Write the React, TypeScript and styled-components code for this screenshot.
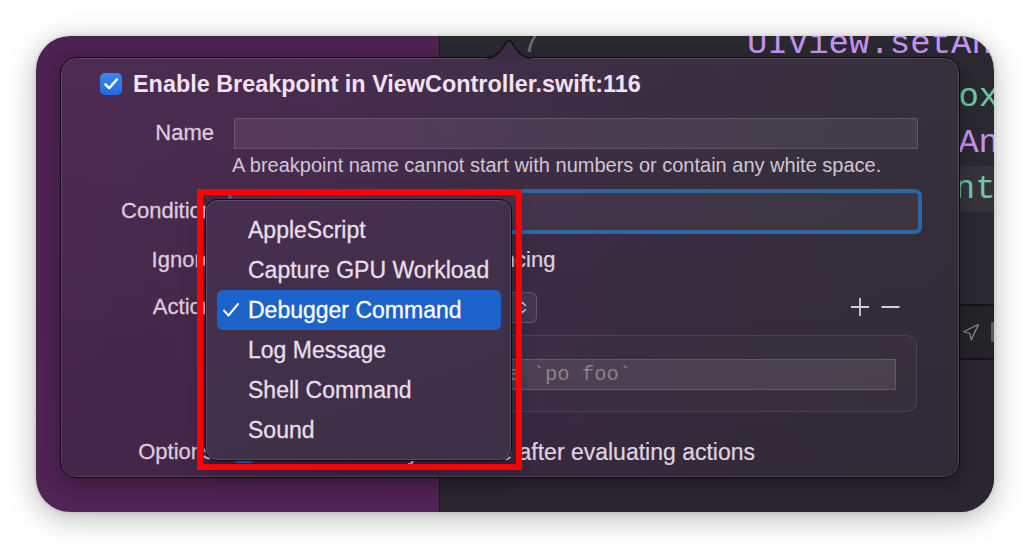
import React from "react";
import styled, { createGlobalStyle } from "styled-components";
import { Navigation } from "lucide-react";

const GlobalStyle = createGlobalStyle`
  html, body { margin: 0; padding: 0; background: #ffffff; }
  body { font-family: "Liberation Sans", Arial, sans-serif; -webkit-font-smoothing: antialiased; }
  *, *::before, *::after { box-sizing: border-box; }
`;

const Page = styled.div`
  width: 1030px;
  height: 548px;
  padding: 36px;
  background: #ffffff;
  overflow: hidden;
`;

const Window = styled.div`
  position: relative;
  display: flex;
  width: 958px;
  height: 476px;
  border-radius: 34px;
  overflow: hidden;
  box-shadow: 0 6px 30px rgba(0, 0, 0, 0.28), 0 0 4px rgba(0, 0, 0, 0.14);
`;

const Sidebar = styled.div`
  width: 403px;
  flex: none;
  background: linear-gradient(180deg, #4c2250 0%, #502454 100%);
`;

const Editor = styled.div`
  flex: 1;
  display: flex;
  flex-direction: column;
  background: #2a292f;
  border-left: 1px solid #1b1a1e;
`;

const CodeArea = styled.div`
  height: 268px;
  flex: none;
  overflow: hidden;
`;

const Lines = styled.div`
  margin-top: -22px;
`;

const CodeLine = styled.div<{ $current?: boolean; $height?: number }>`
  display: flex;
  height: ${(p) => p.$height ?? 46}px;
  line-height: ${(p) => p.$height ?? 46}px;
  font-family: "Liberation Mono", "DejaVu Sans Mono", monospace;
  font-size: 34px;
  white-space: nowrap;
  background: ${(p) => (p.$current ? "#35343b" : "transparent")};
`;

const Gutter = styled.span`
  width: 100px;
  flex: none;
  text-align: right;
  color: #6d6c72;
  font-size: 30px;
`;

const Code = styled.span<{ $indent: number; $kind: "type" | "ident" }>`
  padding-left: ${(p) => p.$indent}px;
  color: ${(p) => (p.$kind === "type" ? "#c592f3" : "#6bc9a9")};
`;

const DebugBar = styled.div`
  height: 56px;
  flex: none;
  display: flex;
  align-items: center;
  padding-left: 521px;
  gap: 11px;
  background: #242328;
  border-top: 2px solid #141316;
  border-bottom: 2px solid #141316;
  color: #8f8e94;
`;

const BarStub = styled.span`
  width: 3px;
  height: 20px;
  border-radius: 1px;
  background: #5c5b61;
`;

const Console = styled.div`
  flex: 1;
  background: #2b2530;
`;

const Popover = styled.div`
  position: absolute;
  left: 24px;
  top: 21px;
  width: 900px;
  height: 421px;
  border-radius: 16px;
  border: 1px solid #0d0b0f;
  background: linear-gradient(180deg, rgba(255, 255, 255, 0.015), rgba(0, 0, 0, 0.07)),
    linear-gradient(90deg, #4a2850 0%, #45294d 28%, #3c2b44 52%, #352d3d 78%, #332d3a 100%);
  box-shadow: inset 0 0 0 1px rgba(255, 255, 255, 0.13), 0 6px 18px rgba(0, 0, 0, 0.3);
  padding: 6px 41px 0 0;
  display: flex;
  flex-direction: column;
  color: #e3d6e3;
`;

const Arrow = styled.svg`
  position: absolute;
  left: 426px;
  top: -22px;
`;

const TitleRow = styled.div`
  height: 40px;
  flex: none;
  display: flex;
  align-items: center;
  gap: 11px;
  padding-left: 39px;
`;

const CheckBox = styled.span<{ $offset?: number }>`
  width: 22px;
  height: 22px;
  flex: none;
  margin-left: ${(p) => p.$offset ?? 0}px;
  border-radius: 5px;
  background: linear-gradient(180deg, #3a87f0, #1e6ce2);
  display: flex;
  align-items: center;
  justify-content: center;
`;

const Title = styled.span`
  font-size: 23.4px;
  font-weight: 700;
  color: #f4e1f3;
  white-space: nowrap;
`;

const Form = styled.div`
  flex: none;
  margin-top: 13px;
  display: grid;
  grid-template-columns: 153px 1fr;
  grid-template-rows: 32px 32px 60px 38px 56px 77px 80px;
  column-gap: 18px;
  align-items: center;
`;

const Label = styled.span`
  text-align: right;
  font-size: 22px;
  color: #dccbdc;
  white-space: nowrap;
  -webkit-text-stroke: 0.3px currentColor;
`;

const TextField = styled.div<{ $width?: number }>`
  height: 31px;
  margin-left: 2px;
  width: ${(p) => (p.$width ? `${p.$width}px` : "auto")};
  flex: none;
  background: rgba(255, 255, 255, 0.075);
  border: 1px solid rgba(255, 255, 255, 0.13);
  border-radius: 1px;
`;

const Hint = styled.span`
  font-size: 20px;
  color: #d2c5d2;
  white-space: nowrap;
`;

const ConditionField = styled.div`
  height: 37px;
  border-radius: 3px;
  background: rgba(255, 255, 255, 0.04);
  box-shadow: 0 0 0 4px #2b68a2;
`;

const InlineRow = styled.div`
  display: flex;
  align-items: center;
`;

const BodyText = styled.span<{ $size?: number; $gap?: number }>`
  font-size: ${(p) => p.$size ?? 22}px;
  margin-left: ${(p) => p.$gap ?? 0}px;
  color: #e0d3e0;
  white-space: nowrap;
  -webkit-text-stroke: 0.2px currentColor;
`;

const PopupButton = styled.div`
  width: 305px;
  height: 31px;
  flex: none;
  display: flex;
  align-items: center;
  justify-content: space-between;
  padding: 0 9px 0 12px;
  border-radius: 6px;
  background: rgba(255, 255, 255, 0.06);
  border: 1px solid rgba(255, 255, 255, 0.17);
  font-size: 22px;
  color: #e6dae6;
`;

const Spacer = styled.span`
  flex: 1;
`;

const PlusMinus = styled.div`
  display: flex;
  align-items: center;
  gap: 11px;
  margin-right: 18px;
`;

const ActionBox = styled.div`
  height: 77px;
  margin-right: 1px;
  border: 1px solid rgba(255, 255, 255, 0.1);
  border-radius: 10px;
  background: rgba(255, 255, 255, 0.02);
  padding: 23px 20px 0 20px;
`;

const CommandField = styled.div`
  height: 31px;
  background: rgba(255, 255, 255, 0.09);
  border: 1px solid rgba(255, 255, 255, 0.14);
  font-family: "Liberation Mono", "DejaVu Sans Mono", monospace;
  font-size: 20.5px;
  line-height: 29px;
  color: #8d838f;
  padding-left: 131px;
  white-space: nowrap;
  overflow: hidden;
`;

const Menu = styled.div`
  position: absolute;
  left: 169px;
  top: 163px;
  width: 307px;
  height: 262px;
  padding: 10px 10px 10px 11px;
  border-radius: 12px;
  border: 1px solid #0e0b10;
  background: linear-gradient(160deg, #472d50 0%, #41304a 55%, #3d3146 100%);
  box-shadow: inset 0 0 0 1px rgba(255, 255, 255, 0.13), 0 8px 22px rgba(0, 0, 0, 0.35);
`;

const MenuItem = styled.div<{ $selected?: boolean }>`
  height: 40px;
  display: flex;
  align-items: center;
  border-radius: 6px;
  font-size: 23px;
  white-space: nowrap;
  -webkit-text-stroke: 0.3px currentColor;
  background: ${(p) => (p.$selected ? "#1c62c8" : "transparent")};
  color: ${(p) => (p.$selected ? "#ffffff" : "#e8dfe8")};
`;

const CheckSlot = styled.span`
  width: 31px;
  flex: none;
  display: flex;
  align-items: center;
  padding-left: 5px;
`;

const RedFrame = styled.div`
  position: absolute;
  left: 161px;
  top: 153px;
  width: 325px;
  height: 281px;
  border: 6px solid #ff0000;
  pointer-events: none;
`;

const CheckGlyph = () => (
  <svg width="22" height="22" viewBox="0 0 22 22">
    <path d="M5.5 11.5 L9.2 15.2 L16.8 6.5" fill="none" stroke="#ffffff" strokeWidth="2.6" strokeLinecap="round" strokeLinejoin="round" />
  </svg>
);

const menuItems = ["AppleScript", "Capture GPU Workload", "Debugger Command", "Log Message", "Shell Command", "Sound"];

export default function App() {
  return (
    <Page>
      <GlobalStyle />
      <Window>
        <Sidebar />
        <Editor>
          <CodeArea>
            <Lines>
              <CodeLine $height={60}>
                <Gutter>7</Gutter>
                <Code $indent={207} $kind="type">UIView.setAnimationsEnabled(false)</Code>
              </CodeLine>
              <CodeLine>
                <Gutter>8</Gutter>
                <Code $indent={398} $kind="ident">boxView.layer</Code>
              </CodeLine>
              <CodeLine>
                <Gutter>9</Gutter>
                <Code $indent={357} $kind="type">setAnimationsEnabled(true)</Code>
              </CodeLine>
              <CodeLine $current>
                <Gutter>10</Gutter>
                <Code $indent={374} $kind="ident">contentView</Code>
              </CodeLine>
            </Lines>
          </CodeArea>
          <DebugBar>
            <Navigation size={19} strokeWidth={1.5} />
            <BarStub />
          </DebugBar>
          <Console />
        </Editor>

        <Popover>
          <Arrow width="44" height="24" viewBox="0 0 44 24">
            <path d="M0 22 C 9 22 14 15 18.5 7.5 Q 22 1.5 25.5 7.5 C 30 15 35 22 44 22 L 44 24 L 0 24 Z" fill="#3c2b44" />
            <path d="M0 22 C 9 22 14 15 18.5 7.5 Q 22 1.5 25.5 7.5 C 30 15 35 22 44 22" fill="none" stroke="#0d0b0f" strokeWidth="1.3" />
          </Arrow>
          <TitleRow>
            <CheckBox>
              <CheckGlyph />
            </CheckBox>
            <Title>Enable Breakpoint in ViewController.swift:116</Title>
          </TitleRow>
          <Form>
            <Label>Name</Label>
            <TextField />

            <span />
            <Hint>A breakpoint name cannot start with numbers or contain any white space.</Hint>

            <Label>Condition</Label>
            <ConditionField />

            <Label>Ignore</Label>
            <InlineRow>
              <TextField $width={84} />
              <BodyText $gap={10}>times before advancing</BodyText>
            </InlineRow>

            <Label>Action</Label>
            <InlineRow>
              <PopupButton>
                <span>Debugger Command</span>
                <svg width="9" height="15" viewBox="0 0 9 15">
                  <path d="M1.5 5.5 L4.5 2.5 L7.5 5.5 M1.5 9.5 L4.5 12.5 L7.5 9.5" fill="none" stroke="#d5c9d5" strokeWidth="1.5" strokeLinecap="round" strokeLinejoin="round" />
                </svg>
              </PopupButton>
              <Spacer />
              <PlusMinus>
                <svg width="20" height="20" viewBox="0 0 20 20">
                  <path d="M10 1 V19 M1 10 H19" stroke="#d8ccd8" strokeWidth="1.8" />
                </svg>
                <svg width="19" height="20" viewBox="0 0 19 20">
                  <path d="M0.5 10 H18.5" stroke="#d8ccd8" strokeWidth="1.8" />
                </svg>
              </PlusMinus>
            </InlineRow>

            <span />
            <ActionBox>
              <CommandField>for example `po foo`</CommandField>
            </ActionBox>

            <Label>Options</Label>
            <InlineRow>
              <CheckBox $offset={1}>
                <CheckGlyph />
              </CheckBox>
              <BodyText $size={23} $gap={27}>
                Automatically continue after evaluating actions
              </BodyText>
            </InlineRow>
          </Form>
        </Popover>

        <Menu>
          {menuItems.map((item) => {
            const selected = item === "Debugger Command";
            return (
              <MenuItem key={item} $selected={selected}>
                <CheckSlot>
                  {selected && (
                    <svg width="18" height="16" viewBox="0 0 18 16">
                      <path d="M2 8.5 L6.5 13.5 L16 2" fill="none" stroke="#ffffff" strokeWidth="2" strokeLinecap="round" strokeLinejoin="round" />
                    </svg>
                  )}
                </CheckSlot>
                <span>{item}</span>
              </MenuItem>
            );
          })}
        </Menu>

        <RedFrame />
      </Window>
    </Page>
  );
}
